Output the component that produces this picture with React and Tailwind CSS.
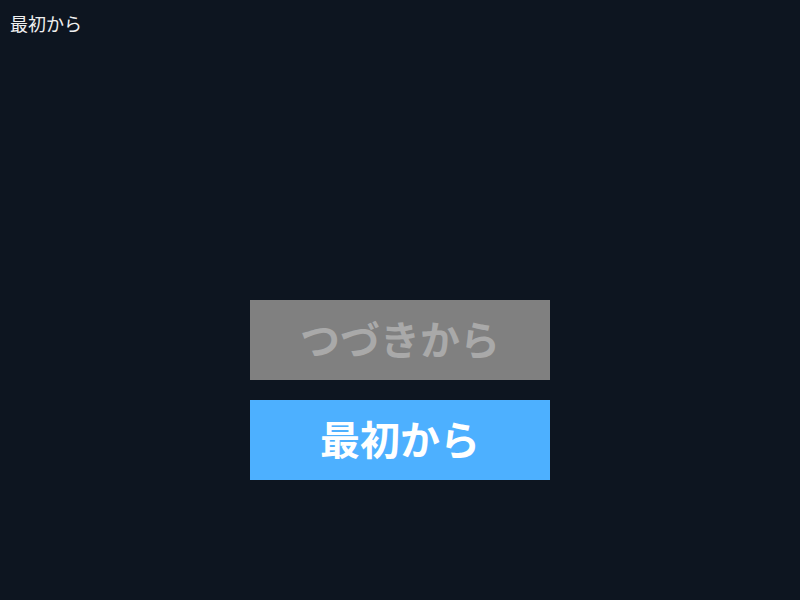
export default function App() {
  return (
    <div
      className="h-screen bg-[#0d1520] text-white"
      style={{ fontFamily: '"Noto Sans CJK JP", "Noto Sans", sans-serif' }}
    >
      <div className="px-[10px] pt-[10px] text-[18px] leading-[27px] text-[#f0f0f0]">最初から</div>
      <div className="mt-[263px] flex flex-col items-center gap-5">
        <button className="h-20 w-[300px] bg-[#808080] pb-1 text-[40px] font-semibold text-[#a9a9a9]">
          つづきから
        </button>
        <button className="h-20 w-[300px] bg-[#4db0ff] pb-1 text-[40px] font-semibold text-white">
          最初から
        </button>
      </div>
    </div>
  );
}
